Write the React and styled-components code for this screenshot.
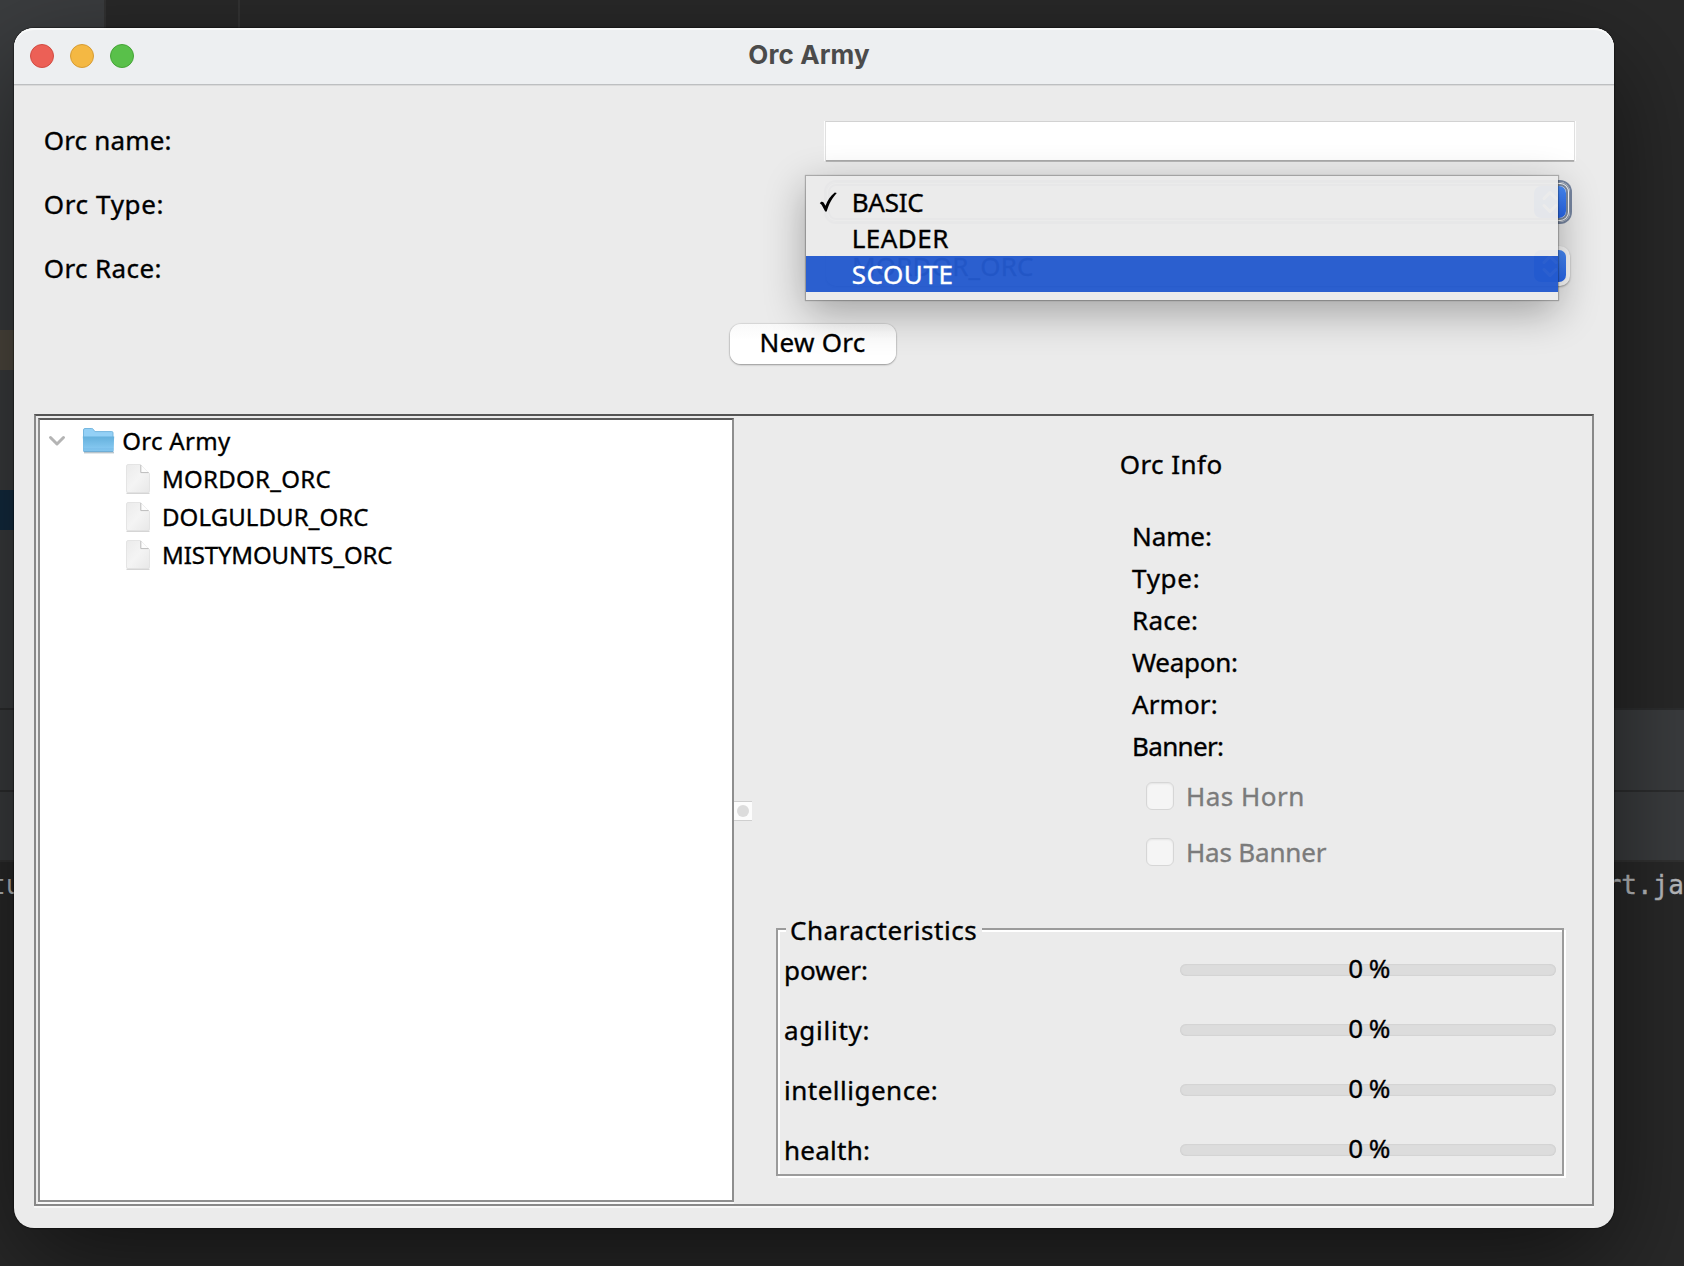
import React from 'react';
import styled, { createGlobalStyle, css } from 'styled-components';

const GlobalStyle = createGlobalStyle`
  * { box-sizing: border-box; }
  body { margin: 0; background: #292929; overflow: hidden; }
`;

const ui = css`
  font-family: 'Noto Sans', sans-serif;
  font-size: 26px;
  color: #000;
  white-space: pre;
`;

const Text = styled.span`
  letter-spacing: ${(p) => p.$spacing || 0}px;
  -webkit-text-stroke: 0.35px currentColor;
`;

/* ---------- editor behind the dialog ---------- */

const Desktop = styled.div`
  position: relative;
  width: 1684px;
  height: 1266px;
  overflow: hidden;
  background: #292929;
`;

const Ide = styled.div`
  display: flex;
  flex-direction: column;
  height: 100%;
`;

const IdeTop = styled.div`
  display: flex;
  height: 708px;
`;

const ProjectPane = styled.div`
  display: flex;
  flex-direction: column;
  width: 106px;
  padding-top: 330px;
  background: #3b3d3f;
  border-right: 2px solid #323232;
`;

const ProjectMark = styled.div`
  height: 40px;
  margin-bottom: 120px;
  background: ${(p) => p.$color};
`;

const Gutter = styled.div`
  width: 134px;
  border-right: 2px solid #333;
`;

const ToolStrip = styled.div`
  height: ${(p) => p.$height}px;
  background: #3b3d3f;
  border-top: 2px solid #2d2e2f;
`;

const Console = styled.div`
  display: flex;
  flex: 1;
  padding-top: 3px;
  border-top: 2px solid #323232;
  font: 26px/40px 'DejaVu Sans Mono', monospace;
  color: #bcbec0;
  white-space: pre;
`;

const ConsoleStart = styled.span`
  width: 1623px;
  margin-left: -10px;
`;

/* ---------- dialog window ---------- */

const Window = styled.div`
  ${ui}
  position: absolute;
  left: 14px;
  top: 28px;
  display: flex;
  flex-direction: column;
  width: 1600px;
  height: 1200px;
  border-radius: 20px;
  background: #ebebeb;
  box-shadow: 0 0 1px 1px rgba(0, 0, 0, 0.35), 0 36px 110px rgba(0, 0, 0, 0.55);
`;

const TitleBar = styled.header`
  display: grid;
  flex-shrink: 0;
  grid-template-columns: 1fr auto 1fr;
  align-items: center;
  height: 58px;
  padding: 0 16px 1px;
  border-radius: 20px 20px 0 0;
  background: #edeff1;
  border-bottom: 1px solid #dadada;
  box-shadow: inset 0 2px 0 #f8f9f9, inset 0 -1px 0 #bdbfc1;
`;

const Lights = styled.div`
  display: flex;
  gap: 16px;
`;

const Light = styled.span`
  width: 24px;
  height: 24px;
  border-radius: 50%;
  background: ${(p) => p.$fill};
  border: 1px solid ${(p) => p.$edge};
`;

const Title = styled.h1`
  margin: 0;
  padding: 0 10px 3px 0;
  font: 700 26px/32px Inter, sans-serif;
  letter-spacing: 0.1px;
  color: #4b4b4b;
`;

const Form = styled.div`
  display: flex;
  justify-content: space-between;
  padding: 34px 38px 0 29.7px;
`;

const Labels = styled.div`
  display: flex;
  flex-direction: column;
  gap: 24px;
  line-height: 40px;
`;

const Controls = styled.div`
  display: flex;
  flex-direction: column;
  width: 752px;
  padding-top: 1px;
`;

const NameField = styled.div`
  height: 40px;
  margin-bottom: 21px;
  border: solid #fdfdfd;
  border-width: 0 1px;
`;

const NameInput = styled.div`
  height: 41px;
  background: linear-gradient(#a4a4a4, #bcbcbc) bottom / 100% 2px no-repeat, #fff;
  border: solid #e0e0e0;
  border-width: 1px 1px 0;
  border-top-color: #d2d2d2;
`;

const Combo = styled.div`
  position: relative;
  display: flex;
  align-items: center;
  justify-content: space-between;
  width: 744px;
  height: 40px;
  margin: 0 0 ${(p) => (p.$focused ? 24 : 0)}px 2px;
  padding: 0 4px 0 26px;
  line-height: 40px;
  border-radius: 10px;
  background: ${(p) => (p.$focused ? '#fff' : '#fafafa')};
  box-shadow: ${(p) =>
    p.$focused
      ? '0 0 0 2px #7685a0, inset 0 0 0 1px #8a96a8, inset 0 0 0 2px #fff, inset 0 0 0 4px #7c8aa0'
      : '0 1px 2px rgba(0,0,0,.35)'};
`;

const Stepper = styled.span`
  display: grid;
  place-items: center;
  width: 32px;
  height: 32px;
  border-radius: 7px;
  background: linear-gradient(#468af8, #2867ee);
`;

const Menu = styled.div`
  position: absolute;
  left: -20px;
  top: -6px;
  width: 752px;
  box-shadow: 0 0 1px 1px rgba(0, 0, 0, 0.24), 0 12px 42px rgba(0, 0, 0, 0.32);
  z-index: 2;

  &::before,
  &::after {
    content: '';
    display: block;
    height: 8px;
    background: rgba(234, 234, 234, 0.97);
  }
`;

const MenuItem = styled.div`
  display: flex;
  align-items: center;
  height: 36px;
  line-height: 36px;
  background: ${(p) => (p.$active ? 'rgba(35, 89, 205, 0.965)' : 'rgba(234, 234, 234, 0.97)')};
  color: ${(p) => (p.$active ? '#fff' : '#000')};
`;

const MenuMark = styled.span`
  display: flex;
  width: 45.7px;
  padding-left: 13px;
`;

const ButtonRow = styled.div`
  display: flex;
  padding: 36px 0 50px 716px;
`;

const PushButton = styled.button`
  ${ui}
  width: 166px;
  height: 40px;
  padding: 0 1px 4px 0;
  border: 0;
  border-radius: 11px;
  background: linear-gradient(#f9f9f9, #fff 40%);
  line-height: 36px;
  box-shadow: 0 0 1px 1px rgba(0, 0, 0, 0.08), 0 1px 2px rgba(0, 0, 0, 0.3);
`;

/* ---------- split pane ---------- */

const SplitPane = styled.div`
  display: flex;
  flex-shrink: 0;
  width: 1560px;
  height: 792px;
  margin-left: 20px;
  border: 2px solid #888;
  border-top-color: #555;
  box-shadow: 0 2px 0 #f7f7f7;
`;

const Tree = styled.div`
  display: flex;
  flex-direction: column;
  width: 696px;
  height: 784px;
  margin: 2px 0 2px 2px;
  padding-top: 2px;
  background: #fff;
  border: 2px solid #8e8e8e;
  border-top-color: #5a5a5a;
  box-shadow: 0 2px 0 #f8f8f8;
  font-size: 24px;
`;

const TreeRow = styled.div`
  display: flex;
  align-items: center;
  height: 38px;
  line-height: 38px;
  padding-left: ${(p) => (p.$leaf ? 85 : 8)}px;
`;

const Twisty = styled.span`
  display: flex;
  width: 34px;
`;

const NodeIcon = styled.span`
  display: flex;
  width: ${(p) => p.$width}px;
`;

const Divider = styled.div`
  display: flex;
  flex-direction: column;
  justify-content: center;
  width: 18px;
  padding-top: 2px;
`;

const Grip = styled.div`
  display: grid;
  place-items: center;
  height: 20px;
  background: #fcfcfc;
  border: solid #cfcfcf;
  border-width: 1px 0;
`;

const GripDot = styled.span`
  width: 12px;
  height: 12px;
  border-radius: 50%;
  background: #dcdcdc;
`;

const Info = styled.div`
  display: flex;
  flex-direction: column;
  flex: 1;
  padding: 27px 28px 0 24px;
  line-height: 42px;
`;

const InfoTitle = styled.div`
  padding-left: 343.7px;
  margin-bottom: 30px;
`;

const InfoList = styled.div`
  display: flex;
  flex-direction: column;
  padding-left: 356px;
`;

const CheckRow = styled.label`
  display: flex;
  align-items: center;
  gap: 12px;
  height: 56px;
  padding-left: 370px;
  color: #7b7b7b;
  line-height: 56px;
`;

const CheckBox = styled.span`
  width: 28px;
  height: 28px;
  border: 1px solid #d6d6d6;
  border-radius: 6px;
  background: #f5f5f5;
  box-shadow: inset 0 1px 2px rgba(0, 0, 0, 0.07);
`;

const Checks = styled.div`
  margin: 1px 0 33px;
`;

const Group = styled.fieldset`
  display: flex;
  flex-direction: column;
  gap: 20px;
  width: 788px;
  margin: 0;
  padding: 5px 6px 4px 6px;
  border: 2px solid #9b9b9b;
  box-shadow: inset 2px 2px 0 #fff, 2px 2px 0 #fff;
  line-height: 40px;
`;

const GroupTitle = styled.legend`
  width: 196px;
  margin-left: 2px;
  padding: 2px 0 0 4px;
  background: #ebebeb;
  line-height: 30px;
`;

const StatRow = styled.div`
  display: flex;
  align-items: center;
  justify-content: space-between;
  height: 40px;
`;

const Track = styled.div`
  display: flex;
  align-items: center;
  justify-content: center;
  width: 376px;
  height: 12px;
  padding: 0 0 4px 2px;
  border-radius: 6px;
  background: #dcdcdc;
  box-shadow: inset 0 0 2px rgba(0, 0, 0, 0.14);
`;

const Chevrons = () => (
  <svg width="20" height="26" viewBox="0 0 20 26" fill="none" stroke="#fff" strokeWidth="3" strokeLinecap="round" strokeLinejoin="round">
    <path d="M4 9.5 10 3.5 16 9.5M4 16.5 10 22.5 16 16.5" />
  </svg>
);

const Tick = () => (
  <svg width="18" height="20" viewBox="0 0 18 20">
    <path d="M.8 11.2C1.6 9.4 3.6 9.1 4.6 10.6L6.5 13.8C8.6 8.4 11.4 3.8 15.8.6L17.8 1C13.2 6 10 11.6 7.7 19.6L6.2 19.6 3 13.6C2.4 12.4 1.8 11.8.8 11.2Z" fill="#000" />
  </svg>
);

const FolderIcon = () => (
  <svg width="34" height="28" viewBox="0 0 34 28">
    <defs>
      <linearGradient id="front" x1="0" y1="0" x2="0" y2="1">
        <stop offset="0" stopColor="#64b0dc" />
        <stop offset="1" stopColor="#8ccdf5" />
      </linearGradient>
    </defs>
    <path d="M2 25.7h30" stroke="#b9c4cb" strokeWidth="1.4" />
    <path d="M1.5 24V3Q1.5 1.5 3 1.5H9.8Q10.8 1.5 11.4 2.4L12.8 4.6H29.8Q31 4.6 31 5.8V24Z" fill="#93d0f6" stroke="#76b7df" strokeWidth="1" />
    <path d="M.8 9.5H32.2L31.4 24.2H1.6Z" fill="url(#front)" />
    <path d="M1.5 22h30" stroke="#74b9e6" strokeWidth="1" />
    <path d="M1.6 24.3H31.4" stroke="#5fa3cf" strokeWidth="1" />
  </svg>
);

const FileIcon = () => (
  <svg width="26" height="32" viewBox="0 0 26 32">
    <defs>
      <linearGradient id="sheet" x1="0" y1="0" x2="1" y2="1">
        <stop offset="0" stopColor="#ebebeb" />
        <stop offset="0.5" stopColor="#f4f4f4" />
        <stop offset="1" stopColor="#e8e8e8" />
      </linearGradient>
    </defs>
    <path d="M2 30.2h22" stroke="#c8c8c8" strokeWidth="1.2" strokeLinecap="round" />
    <path d="M1.5 3Q1.5 1.5 3 1.5H15.5L24.5 10.5V28Q24.5 29.5 23 29.5H3Q1.5 29.5 1.5 28Z" fill="url(#sheet)" stroke="#e0e0e0" strokeWidth="0.8" />
    <path d="M15.8 2V9.6H23.6Z" fill="#fdfdfd" />
    <path d="M15.8 2V9.6H23.6" fill="none" stroke="#bbb" strokeWidth="1" />
  </svg>
);

const LEAVES = [
  ['MORDOR_ORC', 0.28],
  ['DOLGULDUR_ORC', 0.09],
  ['MISTYMOUNTS_ORC', -0.13],
];
const FIELDS = [
  ['Name:', -0.1],
  ['Type:', 0.7],
  ['Race:', 0.3],
  ['Weapon:', -0.3],
  ['Armor:', 0.1],
  ['Banner:', -0.67],
];
const CHECKS = [
  ['Has Horn', 0.5],
  ['Has Banner', -0.18],
];
const STATS = [
  ['power:', 0],
  ['agility:', 0.74],
  ['intelligence:', 0.5],
  ['health:', 0.25],
];

export default function App() {
  return (
    <>
      <GlobalStyle />
      <Desktop>
        <Ide>
          <IdeTop>
            <ProjectPane>
              <ProjectMark $color="#504a40" />
              <ProjectMark $color="#132c41" />
            </ProjectPane>
            <Gutter />
          </IdeTop>
          <ToolStrip $height={82} />
          <ToolStrip $height={70} />
          <Console>
            <ConsoleStart>tu</ConsoleStart>
            <Text>rt.ja</Text>
          </Console>
        </Ide>

        <Window>
          <TitleBar>
            <Lights>
              <Light $fill="#ec6056" $edge="#d24c43" />
              <Light $fill="#f4b843" $edge="#d79c34" />
              <Light $fill="#59c04a" $edge="#45a437" />
            </Lights>
            <Title>Orc Army</Title>
          </TitleBar>

          <Form>
            <Labels>
              <Text $spacing={0.18}>Orc name:</Text>
              <Text $spacing={0.65}>Orc Type:</Text>
              <Text $spacing={0.39}>Orc Race:</Text>
            </Labels>
            <Controls>
              <NameField>
                <NameInput />
              </NameField>
              <Combo $focused>
                <Text />
                <Stepper><Chevrons /></Stepper>
                <Menu>
                  <MenuItem>
                    <MenuMark><Tick /></MenuMark>
                    <Text $spacing={-0.28}>BASIC</Text>
                  </MenuItem>
                  <MenuItem>
                    <MenuMark />
                    <Text $spacing={0.47}>LEADER</Text>
                  </MenuItem>
                  <MenuItem $active>
                    <MenuMark />
                    <Text $spacing={0.55}>SCOUTE</Text>
                  </MenuItem>
                </Menu>
              </Combo>
              <Combo>
                <Text $spacing={0.16}>MORDOR_ORC</Text>
                <Stepper><Chevrons /></Stepper>
              </Combo>
            </Controls>
          </Form>

          <ButtonRow>
            <PushButton><Text $spacing={0.25}>New Orc</Text></PushButton>
          </ButtonRow>

          <SplitPane>
            <Tree>
              <TreeRow>
                <Twisty>
                  <svg width="18" height="12" viewBox="0 0 18 12" fill="none" stroke="#b4b4b4" strokeWidth="3" strokeLinecap="round" strokeLinejoin="round">
                    <path d="M2.5 2.5 9 9 15.5 2.5" />
                  </svg>
                </Twisty>
                <NodeIcon $width={40.2}><FolderIcon /></NodeIcon>
                <Text $spacing={0.3}>Orc Army</Text>
              </TreeRow>
              {LEAVES.map(([name, spacing]) => (
                <TreeRow $leaf key={name}>
                  <NodeIcon $width={37}><FileIcon /></NodeIcon>
                  <Text $spacing={spacing}>{name}</Text>
                </TreeRow>
              ))}
            </Tree>
            <Divider>
              <Grip><GripDot /></Grip>
            </Divider>
            <Info>
              <InfoTitle><Text $spacing={0.45}>Orc Info</Text></InfoTitle>
              <InfoList>
                {FIELDS.map(([name, spacing]) => (
                  <Text $spacing={spacing} key={name}>{name}</Text>
                ))}
              </InfoList>
              <Checks>
                {CHECKS.map(([name, spacing]) => (
                  <CheckRow key={name}>
                    <CheckBox />
                    <Text $spacing={spacing}>{name}</Text>
                  </CheckRow>
                ))}
              </Checks>
              <Group>
                <GroupTitle><Text $spacing={0.52}>Characteristics</Text></GroupTitle>
                {STATS.map(([name, spacing]) => (
                  <StatRow key={name}>
                    <Text $spacing={spacing}>{name}</Text>
                    <Track><Text $spacing={-0.5}>0 %</Text></Track>
                  </StatRow>
                ))}
              </Group>
            </Info>
          </SplitPane>
        </Window>
      </Desktop>
    </>
  );
}
